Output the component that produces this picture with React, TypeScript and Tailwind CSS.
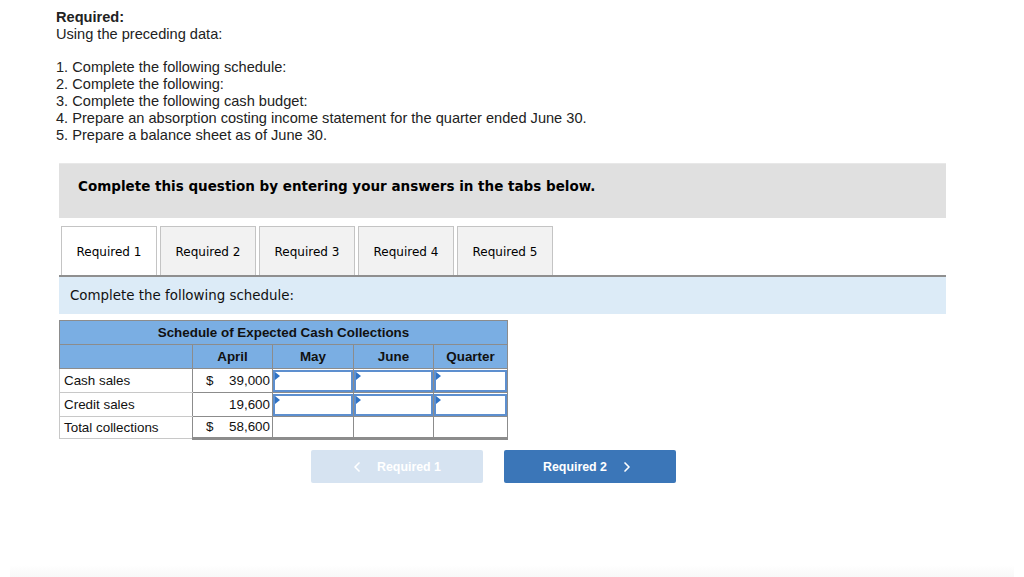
import { ChevronLeft, ChevronRight } from "lucide-react";

const tabs = ["Required 1", "Required 2", "Required 3", "Required 4", "Required 5"];

const InputCell = () => (
  <td className="border border-[#8c8c8c] p-0 h-[24px]">
    <div className="relative h-[22px] border-2 border-[#5d8fcf] bg-white">
      <span className="absolute left-0 top-0 w-0 h-0 border-l-[5px] border-l-[#2f72c4] border-y-[4px] border-y-transparent" />
    </div>
  </td>
);

export default function App() {
  return (
    <div className="relative h-[577px] bg-white overflow-hidden text-[#222]">
      <div className="pl-[56px] pt-[9px] text-[14.6px] leading-[16.8px] font-['Liberation_Sans',Arial,sans-serif]">
        <p className="font-bold">Required:</p>
        <p>Using the preceding data:</p>
        <p>&nbsp;</p>
        <p>1. Complete the following schedule:</p>
        <p>2. Complete the following:</p>
        <p>3. Complete the following cash budget:</p>
        <p>4. Prepare an absorption costing income statement for the quarter ended June 30.</p>
        <p>5. Prepare a balance sheet as of June 30.</p>
      </div>

      <div className="ml-[59px] w-[887px] mt-[20px]">
        <div className="h-[55px] bg-[#e0e0e0] border-t border-[#e8e8e8] flex items-center pb-[11px] px-[19px] font-['DejaVu_Sans',Verdana,sans-serif] font-bold text-[13.5px] text-black">
          Complete this question by entering your answers in the tabs below.
        </div>

        <div className="mt-[8px] flex gap-[3px] pl-[2px] border-b-2 border-[#8f8f8f] font-['DejaVu_Sans',Verdana,sans-serif] text-[12px] text-black">
          {tabs.map((t, i) => (
            <div
              key={t}
              className={
                i === 0
                  ? "w-[96px] h-[49px] flex items-center justify-center pt-[2px] bg-white border border-b-0 border-[#c4c4c4]"
                  : "w-[96px] h-[49px] flex items-center justify-center pt-[2px] bg-[#f2f2f2] border border-b-0 border-[#c4c4c4]"
              }
            >
              {t}
            </div>
          ))}
        </div>

        <div className="h-[37px] bg-[#dcebf7] flex items-center pl-[11px] font-['DejaVu_Sans',Verdana,sans-serif] text-[13.4px] text-[#111]">
          Complete the following schedule:
        </div>

        <table className="mt-[6px] border-collapse font-['Liberation_Sans',Arial,sans-serif] text-[13.4px] text-[#111]">
          <colgroup>
            <col className="w-[133px]" />
            <col className="w-[80px]" />
            <col className="w-[81px]" />
            <col className="w-[80px]" />
            <col className="w-[74px]" />
          </colgroup>
          <thead>
            <tr className="bg-[#7aaee3] h-[24px]">
              <th colSpan={5} className="border border-[#8c8c8c] font-bold text-center">
                Schedule of Expected Cash Collections
              </th>
            </tr>
            <tr className="bg-[#7aaee3] h-[24px] font-bold">
              <th className="border border-[#8c8c8c]"></th>
              <th className="border border-[#8c8c8c] text-center">April</th>
              <th className="border border-[#8c8c8c] text-center">May</th>
              <th className="border border-[#8c8c8c] text-center">June</th>
              <th className="border border-[#8c8c8c] text-center">Quarter</th>
            </tr>
          </thead>
          <tbody>
            <tr className="h-[24px]">
              <td className="border border-[#c8c8c8] border-r-[#8c8c8c] pl-[4px]">Cash sales</td>
              <td className="border border-[#8c8c8c] pl-[13px] pr-[2px]">
                <div className="flex justify-between"><span>$</span><span>39,000</span></div>
              </td>
              <InputCell />
              <InputCell />
              <InputCell />
            </tr>
            <tr className="h-[24px]">
              <td className="border border-[#c8c8c8] border-r-[#8c8c8c] pl-[4px]">Credit sales</td>
              <td className="border border-[#8c8c8c] pr-[2px] text-right">19,600</td>
              <InputCell />
              <InputCell />
              <InputCell />
            </tr>
            <tr className="h-[22px]">
              <td className="border border-[#c8c8c8] border-r-[#8c8c8c] pl-[4px]">Total collections</td>
              <td className="border border-[#8c8c8c] border-b-[3px] pl-[13px] pr-[2px]">
                <div className="flex justify-between"><span>$</span><span>58,600</span></div>
              </td>
              <td className="border border-[#8c8c8c] border-b-[3px]"></td>
              <td className="border border-[#8c8c8c] border-b-[3px]"></td>
              <td className="border border-[#8c8c8c] border-b-[3px]"></td>
            </tr>
          </tbody>
        </table>

        <div className="mt-[10px] ml-[252px] flex gap-[21px] font-['Liberation_Sans',Arial,sans-serif] font-bold text-[12.4px] text-white">
          <div className="w-[172px] h-[33px] rounded-[2px] bg-[#d6e3f1] flex items-center justify-center gap-[12px] pr-[4px]">
            <ChevronLeft size={16} strokeWidth={2.5} />
            <span>Required 1</span>
          </div>
          <div className="w-[172px] h-[33px] rounded-[2px] bg-[#3b76b8] flex items-center justify-center gap-[12px] pr-[2px]">
            <span>Required 2</span>
            <ChevronRight size={16} strokeWidth={2.5} />
          </div>
        </div>
      </div>

      <div className="absolute left-[10px] right-[10px] bottom-0 h-[12px] bg-gradient-to-b from-white to-[#f8f8f8]" />
    </div>
  );
}
